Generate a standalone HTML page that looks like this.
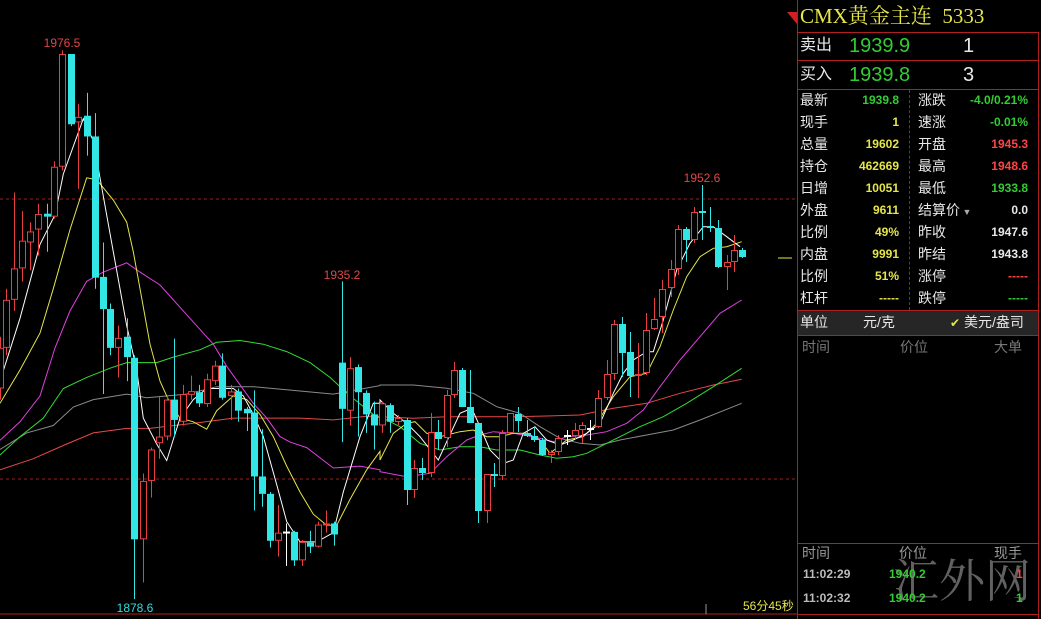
<!DOCTYPE html>
<html><head><meta charset="utf-8">
<style>
body{margin:0;background:#000;width:1041px;height:619px;overflow:hidden;position:relative;font-family:"Liberation Sans","Noto Sans CJK SC",sans-serif}
.a{position:absolute;white-space:nowrap;line-height:1.15}
.hl{position:absolute;height:1px;background:#b02020}
.lab{font-size:14px;color:#e8e8e8}
.v{font-size:12px;font-weight:bold;text-align:right}
.y{color:#e6e64a}.g{color:#33cc33}.r{color:#ff4444}.w{color:#e8e8e8}
</style></head><body>
<svg id="ch" width="800" height="619" style="position:absolute;left:0;top:0">
<line x1="0" y1="199" x2="796" y2="199" stroke="#a02020" stroke-dasharray="3,3"/>
<line x1="0" y1="479" x2="796" y2="479" stroke="#a02020" stroke-dasharray="3,3"/>
<line x1="0" y1="614" x2="797" y2="614" stroke="#b02020"/>
<line x1="706" y1="604" x2="706" y2="614" stroke="#999"/>
<line x1="778" y1="258" x2="792" y2="258" stroke="#e6e64a"/>
<g id="lines" fill="none" stroke-width="1"></g>
<g id="cs"></g>
<text x="62" y="47" fill="#e04848" font-size="12" text-anchor="middle" font-family="Liberation Sans">1976.5</text>
<text x="342" y="279" fill="#e04848" font-size="12" text-anchor="middle" font-family="Liberation Sans">1935.2</text>
<text x="702" y="182" fill="#e04848" font-size="12" text-anchor="middle" font-family="Liberation Sans">1952.6</text>
<text x="135" y="612" fill="#33dddd" font-size="12" text-anchor="middle" font-family="Liberation Sans">1878.6</text>
</svg>
<div class="a y" style="left:743px;top:600px;font-size:12px">56分45秒</div>

<div class="a" style="left:797px;top:0;width:1px;height:619px;background:#b02020"></div>
<div class="a" style="left:1038px;top:33px;width:1px;height:586px;background:#b02020"></div>
<svg class="a" style="left:784px;top:12px" width="14" height="14"><polygon points="3,0 13,0 13,12" fill="#d02020"/></svg>
<div class="a" style="left:800px;top:4px;font-size:21px;color:#e6e64a;font-family:'Liberation Serif','Noto Serif CJK SC',serif">CMX黄金主连&nbsp;&nbsp;5333</div>
<div class="hl" style="left:797px;top:32px;width:242px"></div>
<div class="a lab" style="left:800px;top:37px;font-size:16px">卖出</div>
<div class="a g" style="left:849px;top:35px;font-size:20px">1939.9</div>
<div class="a w" style="left:963px;top:35px;font-size:20px">1</div>
<div class="hl" style="left:797px;top:60px;width:242px"></div>
<div class="a lab" style="left:800px;top:66px;font-size:16px">买入</div>
<div class="a g" style="left:849px;top:64px;font-size:20px">1939.8</div>
<div class="a w" style="left:963px;top:64px;font-size:20px">3</div>
<div class="hl" style="left:797px;top:89px;width:242px"></div>
<div class="a" style="left:909px;top:90px;width:0;height:220px;border-left:1px dashed #a02020"></div>
<div id="st"></div>
<div class="hl" style="left:797px;top:310px;width:242px"></div>
<div class="a" style="left:798px;top:311px;width:240px;height:24px;background:#262626"></div>
<div class="a lab" style="left:800px;top:314px">单位</div>
<div class="a lab" style="left:863px;top:314px">元/克</div>
<div class="a lab" style="left:950px;top:314px"><span class="y" style="font-size:12px">✔</span> 美元/盎司</div>
<div class="hl" style="left:797px;top:335px;width:242px"></div>
<div class="a" style="left:802px;top:339px;font-size:14px;color:#777">时间</div>
<div class="a" style="left:900px;top:339px;font-size:14px;color:#777">价位</div>
<div class="a" style="left:994px;top:339px;font-size:14px;color:#777">大单</div>
<div class="hl" style="left:797px;top:543px;width:242px"></div>
<div class="a" style="left:802px;top:545px;font-size:14px;color:#999">时间</div>
<div class="a" style="left:899px;top:545px;font-size:14px;color:#999">价位</div>
<div class="a" style="left:994px;top:545px;font-size:14px;color:#999">现手</div>
<div class="a" style="left:893px;top:552px;font-size:46px;color:#7a7a7a;opacity:.8;font-family:'Noto Serif CJK SC',serif">汇外网</div>
<div class="a" style="left:803px;top:568px;font-size:12px;font-weight:bold;color:#bbb">11:02:29</div>
<div class="a g" style="left:889px;top:568px;font-size:12px;font-weight:bold">1940.2</div>
<div class="a r" style="left:1016px;top:568px;font-size:12px;font-weight:bold">1</div>
<div class="a" style="left:803px;top:592px;font-size:12px;font-weight:bold;color:#bbb">11:02:32</div>
<div class="a g" style="left:889px;top:592px;font-size:12px;font-weight:bold">1940.2</div>
<div class="a g" style="left:1016px;top:592px;font-size:12px;font-weight:bold">1</div>
<div class="hl" style="left:797px;top:614px;width:242px"></div>

<script>
var rows=[["最新","1939.8","g","涨跌","-4.0/0.21%","g"],["现手","1","y","速涨","-0.01%","g"],["总量","19602","y","开盘","1945.3","r"],["持仓","462669","y","最高","1948.6","r"],["日增","10051","y","最低","1933.8","g"],["外盘","9611","y","结算价<span style='font-size:9px;color:#aaa'> ▼</span>","0.0","w"],["比例","49%","y","昨收","1947.6","w"],["内盘","9991","y","昨结","1943.8","w"],["比例","51%","y","涨停","-----","r"],["杠杆","-----","y","跌停","-----","g"]];
var h="";rows.forEach(function(r,i){var t=92+i*22;
h+='<div class="a lab" style="left:800px;top:'+t+'px">'+r[0]+'</div>';
h+='<div class="a v '+r[2]+'" style="left:830px;width:69px;top:'+(t+2)+'px">'+r[1]+'</div>';
h+='<div class="a lab" style="left:918px;top:'+t+'px">'+r[3]+'</div>';
h+='<div class="a v '+r[5]+'" style="left:950px;width:78px;top:'+(t+2)+'px">'+r[4]+'</div>';});
document.getElementById("st").innerHTML=h;
function z4(x,y){return [x/3,30+y*0.3696];}
function z5(x,y){return [380+x/3,160+y/3];}
var A=[[0,860,970,830,1000,'r'],[18,730,860,700,880,'r'],[43,645,730,440,760,'r'],[67,570,645,490,680,'r'],[90,545,575,520,650,'r'],[115,498,540,470,610,'r'],[140,497,505,470,600,'c'],[162,370,505,355,510,'r'],[187,65,370,55,380,'r'],[212,65,255,65,260,'c'],[235,235,250,200,430,'r'],[260,232,288,170,340,'c'],[284,288,670,225,700,'c'],[308,668,755,575,985,'c'],[330,755,860,740,880,'c'],[355,833,860,800,940,'r'],[380,830,885,780,950,'c'],[403,887,1378,880,1540,'c'],[428,1220,1378,1200,1495,'r'],[452,1135,1220,1130,1265,'r'],[476,1100,1118,990,1160,'r'],[500,1000,1100,990,1110,'r'],[523,1000,1055,835,1100,'c'],[548,985,1060,960,1070,'r'],[572,977,987,935,1000,'r'],[597,980,1010,960,1020,'c'],[620,945,1012,930,1020,'r'],[645,908,950,895,960,'r'],[667,908,995,875,1000,'c'],[692,978,990,960,1055,'r'],[715,978,1030,970,1060,'c'],[740,1025,1037,1020,1085,'c'],[763,1035,1208,975,1300,'c'],[787,1208,1255,1080,1290,'c'],[810,1255,1382,1250,1400,'c'],[835,1360,1382,1285,1425,'r'],[858,1357,1360,1335,1450,'w'],[883,1358,1435,1355,1450,'c'],[907,1385,1435,1380,1450,'r'],[930,1387,1398,1355,1415,'c'],[955,1338,1398,1330,1400,'r'],[978,1335,1340,1300,1360,'r'],[1003,1335,1365,1330,1395,'c'],[1027,900,1025,680,1115,'c'],[1050,915,1030,885,1070,'r'],[1075,912,980,905,1100,'c'],[1098,982,1040,975,1090,'c'],[1123,1040,1070,1005,1135,'c'],[1147,1010,1070,1005,1090,'r'],[1170,1015,1060,1010,1090,'c']];
var B=[[398,418,422,415,425,'r'],[407,420,490,418,505,'c'],[414,468,490,460,498,'r'],[422,468,473,458,480,'c'],[431,432,473,413,477,'r'],[438,432,439,420,450,'c'],[447,395,438,390,447,'r'],[454,370,395,362,398,'r'],[462,370,407,368,407,'c'],[470,407,423,370,423,'c'],[478,423,511,423,523,'c'],[487,474,511,474,523,'r'],[494,474,476,463,487,'c'],[502,433,476,430,480,'r'],[510,413,433,413,433,'r'],[518,414,421,407,432,'c'],[527,433,436,420,437,'c'],[534,436,440,427,442,'c'],[542,440,455,438,456,'c'],[551,452,455,450,463,'r'],[558,438,452,435,455,'r'],[567,435,436,430,445,'w'],[575,430,436,423,440,'r'],[582,425,430,422,443,'r'],[590,428,429,420,440,'w'],[598,398,427,390,428,'r'],[607,374,398,360,400,'r'],[614,324,374,320,380,'r'],[622,324,353,317,377,'c'],[630,352,376,332,397,'c'],[638,374,376,343,398,'r'],[646,330,373,313,375,'r'],[654,319,329,298,330,'r'],[662,289,317,280,333,'r'],[671,269,288,260,297,'r'],[678,229,269,225,275,'r'],[686,229,240,227,262,'c'],[694,212,240,207,243,'r'],[702,211,213,185,240,'c'],[710,226,228,207,232,'c'],[718,228,267,220,268,'c'],[727,262,267,255,290,'r'],[734,250,262,235,272,'r'],[742,250,257,248,258,'c']];
var s="";
function cd(x,t,b,wt,wb,c){var col=c=='r'?'#e84040':c=='c'?'#33e6e6':'#ffffff';
s+='<line x1="'+(x+.5)+'" y1="'+wt+'" x2="'+(x+.5)+'" y2="'+wb+'" stroke="'+col+'"/>';
if(b-t<2){s+='<rect x="'+(x-3)+'" y="'+t+'" width="7" height="2" fill="'+col+'"/>';}
else if(c=='r'){s+='<rect x="'+(x-2.5)+'" y="'+(t+.5)+'" width="6" height="'+(b-t-1)+'" fill="#000" stroke="'+col+'"/>';}
else{s+='<rect x="'+(x-3)+'" y="'+t+'" width="7" height="'+(b-t)+'" fill="'+col+'"/>';}}
A.forEach(function(a){var x=Math.round(a[0]/3);var f=function(v){return 30+v*0.3696};cd(x,f(a[1]),f(a[2]),f(a[3]),f(a[4]),a[5]);});
B.forEach(function(a){cd(a[0],a[1],a[2],a[3],a[4],a[5]);});
document.getElementById("cs").innerHTML=s;
var L=[
['#e84848',[[0,1190],[100,1160],[200,1120],[280,1090],[380,1078],[450,1078],[600,1062],[700,1050],[800,1050],[900,1050],[1000,1055],[1100,1045],[1140,1045]],[[0,770],[100,775],[200,770],[300,770],[400,770],[500,768],[600,765],[700,745],[800,730],[900,700],[1000,675],[1085,658]]],
['#8a8a8a',[[0,1135],[80,1090],[160,1070],[220,1020],[280,1000],[380,985],[440,995],[560,985],[650,965],[760,965],[880,975],[1000,985],[1140,962]],[[0,675],[100,675],[200,685],[280,700],[350,740],[420,760],[480,800],[540,835],[600,850],[660,855],[720,840],[800,825],[880,810],[960,780],[1085,730]]],
['#33dd33',[[0,1150],[60,1100],[130,1050],[190,970],[260,940],[330,915],[380,900],[420,900],[470,900],[520,885],[600,865],[650,845],[720,840],[790,850],[860,870],[930,900],[990,940],[1050,990],[1120,1040],[1140,1050]],[[0,770],[60,800],[120,850],[180,870],[240,860],[300,860],[350,870],[420,870],[480,885],[530,895],[580,890],[620,880],[680,850],[740,820],[780,800],[850,770],[920,730],[1000,680],[1085,625]]],
['#e040e0',[[0,1110],[60,1060],[120,990],[165,860],[210,760],[260,680],[310,655],[380,630],[420,655],[480,690],[550,760],[600,810],[640,850],[680,910],[720,960],[760,1010],[800,1050],[840,1100],[870,1115],[920,1130],[1000,1185],[1080,1180],[1140,1190]],[[0,935],[80,950],[150,940],[200,890],[260,840],[300,825],[340,815],[400,820],[460,830],[520,845],[560,830],[620,825],[680,815],[740,790],[790,750],[840,680],[900,600],[960,530],[1020,460],[1085,420]]],
['#e6e64a',[[0,1010],[60,920],[120,820],[160,700],[210,540],[260,400],[290,405],[340,460],[380,520],[400,600],[420,700],[450,850],[480,950],[510,1010],[540,1050],[580,1060],[620,1080],[650,1030],[700,990],[740,1000],[780,1040],[820,1100],[860,1180],[900,1250],[940,1310],[980,1340],[1010,1340],[1050,1270],[1100,1190],[1140,1140]],[[0,900],[40,820],[80,790],[105,785],[140,820],[180,830],[240,815],[280,810],[320,830],[360,830],[400,820],[440,820],[480,840],[510,880],[560,840],[610,830],[650,790],[700,710],[750,650],[800,640],[840,560],[880,450],[920,350],[960,290],[1000,265],[1040,260],[1085,245]]],
['#ffffff',[[0,950],[60,780],[120,580],[165,500],[190,390],[250,240],[280,300],[300,400],[340,600],[380,800],[410,920],[430,1050],[470,1120],[500,1165],[540,1050],[580,1000],[620,970],[650,970],[700,970],[730,990],[760,1040],[790,1100],[830,1230],[860,1330],[900,1385],[950,1385],[1000,1360],[1030,1250],[1080,1100],[1120,1010],[1140,1010]],[[0,720],[40,760],[80,790],[120,830],[175,900],[200,845],[240,760],[275,745],[300,800],[330,870],[370,910],[400,900],[430,820],[465,800],[500,840],[540,855],[580,840],[620,820],[660,790],[700,700],[730,640],[760,600],[800,575],[820,575],[850,480],[890,330],[930,250],[970,200],[1000,200],[1040,230],[1080,260]]]];
var ls="";L.forEach(function(l){var p=l[1].map(function(q){var r=z4(q[0],q[1]);return r[0].toFixed(1)+","+r[1].toFixed(1)}).concat(l[2].map(function(q){var r=z5(q[0],q[1]);return r[0].toFixed(1)+","+r[1].toFixed(1)}));
ls+='<polyline points="'+p.join(" ")+'" stroke="'+l[0]+'"/>';});
document.getElementById("lines").innerHTML=ls;
</script>
</body></html>
